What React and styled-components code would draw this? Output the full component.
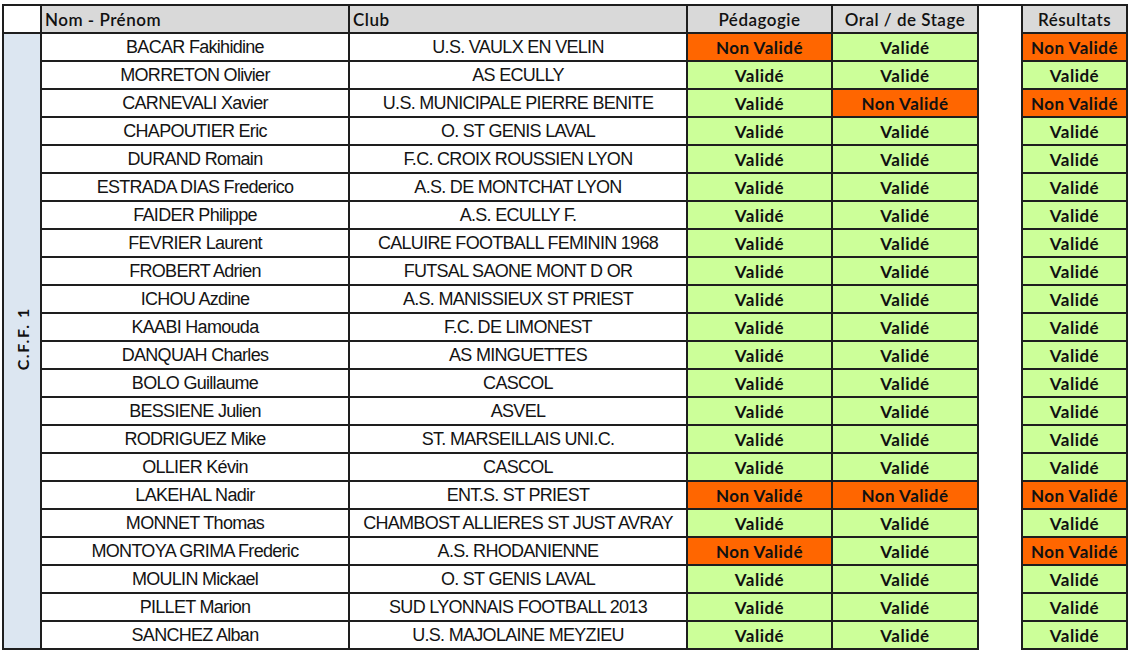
import styled, { createGlobalStyle } from 'styled-components';

const GlobalStyle = createGlobalStyle`
  body {
    margin: 0;
    background: #ffffff;
  }
`;

const rows = [
  ['BACAR Fakihidine', 'U.S. VAULX EN VELIN', false, true, false],
  ['MORRETON Olivier', 'AS ECULLY', true, true, true],
  ['CARNEVALI Xavier', 'U.S. MUNICIPALE PIERRE BENITE', true, false, false],
  ['CHAPOUTIER Eric', 'O. ST GENIS LAVAL', true, true, true],
  ['DURAND Romain', 'F.C. CROIX ROUSSIEN LYON', true, true, true],
  ['ESTRADA DIAS Frederico', 'A.S. DE MONTCHAT LYON', true, true, true],
  ['FAIDER Philippe', 'A.S. ECULLY F.', true, true, true],
  ['FEVRIER Laurent', 'CALUIRE FOOTBALL FEMININ 1968', true, true, true],
  ['FROBERT Adrien', 'FUTSAL SAONE MONT D OR', true, true, true],
  ['ICHOU Azdine', 'A.S. MANISSIEUX ST PRIEST', true, true, true],
  ['KAABI Hamouda', 'F.C. DE LIMONEST', true, true, true],
  ['DANQUAH Charles', 'AS MINGUETTES', true, true, true],
  ['BOLO Guillaume', 'CASCOL', true, true, true],
  ['BESSIENE Julien', 'ASVEL', true, true, true],
  ['RODRIGUEZ Mike', 'ST. MARSEILLAIS UNI.C.', true, true, true],
  ['OLLIER Kévin', 'CASCOL', true, true, true],
  ['LAKEHAL Nadir', 'ENT.S. ST PRIEST', false, false, false],
  ['MONNET Thomas', 'CHAMBOST ALLIERES ST JUST AVRAY', true, true, true],
  ['MONTOYA GRIMA Frederic', 'A.S. RHODANIENNE', false, true, false],
  ['MOULIN Mickael', 'O. ST GENIS LAVAL', true, true, true],
  ['PILLET Marion', 'SUD LYONNAIS FOOTBALL 2013', true, true, true],
  ['SANCHEZ Alban', 'U.S. MAJOLAINE MEYZIEU', true, true, true],
];

const Sheet = styled.table`
  margin: 4px 0 0 2px;
  width: 1124px;
  table-layout: fixed;
  border-collapse: collapse;
`;

const Th = styled.th`
  height: 26px;
  padding: 0 3px;
  border: 2px solid #1e1e1e;
  background: ${(p) => (p.$blank ? '#ffffff' : '#d9d9d9')};
  font-family: Lato, 'Open Sans', sans-serif;
  font-size: 17px;
  font-weight: 600;
  color: #111;
  text-align: ${(p) => p.$align || 'center'};
  letter-spacing: 0.5px;
  white-space: nowrap;
`;

const GapTh = styled.th`
  border-top: 2px solid #1e1e1e;
  border-bottom: none;
  background: #ffffff;
`;

const Side = styled.td`
  border: 2px solid #1e1e1e;
  background: #dce6f1;
  padding: 0;
  text-align: center;
  vertical-align: middle;
`;

const SideLabel = styled.span`
  display: inline-block;
  writing-mode: vertical-rl;
  transform: rotate(180deg);
  font-family: Lato, 'Open Sans', sans-serif;
  font-size: 16px;
  font-weight: 700;
  color: #111;
  letter-spacing: 1.6px;
`;

const Cell = styled.td`
  height: 26px;
  padding: 0 4px;
  border: 2px solid #1e1e1e;
  font-family: 'Liberation Sans', Arial, sans-serif;
  font-size: 18px;
  color: #141414;
  text-align: center;
  letter-spacing: -0.7px;
  white-space: nowrap;
  overflow: hidden;
`;

const Status = styled.td`
  height: 26px;
  padding: 0;
  border: 2px solid #1e1e1e;
  background: ${(p) => (p.$ok ? '#ccff99' : '#ff6600')};
  font-family: Lato, 'Open Sans', sans-serif;
  font-size: 17px;
  font-weight: 700;
  color: #111;
  text-align: center;
  letter-spacing: 0.5px;
  white-space: nowrap;
`;

const Gap = styled.td`
  border-top: none;
  border-bottom: none;
  background: #ffffff;
`;

const label = (ok) => (ok ? 'Validé' : 'Non Validé');

const App = () => (
  <>
    <GlobalStyle />
    <Sheet>
      <colgroup>
        <col style={{ width: 38 }} />
        <col style={{ width: 308 }} />
        <col style={{ width: 338 }} />
        <col style={{ width: 145 }} />
        <col style={{ width: 146 }} />
        <col style={{ width: 44 }} />
        <col style={{ width: 105 }} />
      </colgroup>
      <thead>
        <tr>
          <Th $blank />
          <Th $align="left">Nom - Prénom</Th>
          <Th $align="left">Club</Th>
          <Th>Pédagogie</Th>
          <Th>Oral / de Stage</Th>
          <GapTh />
          <Th>Résultats</Th>
        </tr>
      </thead>
      <tbody>
        {rows.map(([name, club, peda, oral, res], i) => (
          <tr key={name}>
            {i === 0 && (
              <Side rowSpan={rows.length}>
                <SideLabel>C.F.F. 1</SideLabel>
              </Side>
            )}
            <Cell>{name}</Cell>
            <Cell>{club}</Cell>
            <Status $ok={peda}>{label(peda)}</Status>
            <Status $ok={oral}>{label(oral)}</Status>
            <Gap />
            <Status $ok={res}>{label(res)}</Status>
          </tr>
        ))}
      </tbody>
    </Sheet>
  </>
);

export default App;
